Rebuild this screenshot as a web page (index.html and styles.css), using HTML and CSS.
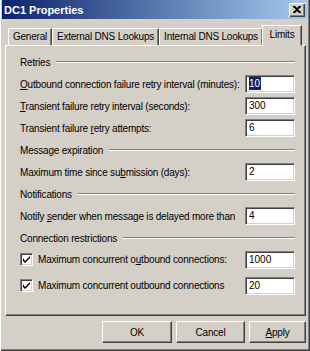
FILE: index.html
```html
<!DOCTYPE html>
<html>
<head>
<meta charset="utf-8">
<link rel="stylesheet" href="styles.css">
</head>
<body>
<div class="window">
  <div class="titlebar">
    <span class="title">DC1 Properties</span>
    <span class="close"><svg width="8" height="7" viewBox="0 0 8 7"><path d="M0 0h2l2 2 2-2h2v1L5 3.5 8 6v1H6L4 5 2 7H0V6l3-2.5L0 1z" fill="#000"/></svg></span>
  </div>
  <div class="content">
    <div class="tabs">
      <div class="tab t-general">General</div>
      <div class="tab t-ext">External DNS Lookups</div>
      <div class="tab t-int">Internal DNS Lookups</div>
      <div class="tab t-limits active">Limits</div>
    </div>
    <div class="panel">
      <div class="group first"><span>Retries</span><i class="rule"></i></div>
      <div class="row"><span class="lbl"><u>O</u>utbound connection failure retry interval (minutes):</span><span class="field"><span class="hl">10</span></span></div>
      <div class="row"><span class="lbl"><u>T</u>ransient failure retry interval (seconds):</span><span class="field">300</span></div>
      <div class="row"><span class="lbl">Transient failure <u>r</u>etry attempts:</span><span class="field">6</span></div>
      <div class="group"><span>Message expiration</span><i class="rule"></i></div>
      <div class="row"><span class="lbl">Maximum time since su<u>b</u>mission (days):</span><span class="field">2</span></div>
      <div class="group"><span>Notifications</span><i class="rule"></i></div>
      <div class="row"><span class="lbl">Notify <u>s</u>ender when message is delayed more than</span><span class="field">4</span></div>
      <div class="group"><span>Connection restrictions</span><i class="rule"></i></div>
      <div class="row"><span class="lbl"><span class="check"><svg width="7" height="7" viewBox="0 0 7 7"><path d="M0 2v3l2 2 5-5V0L2 5z" fill="#000"/></svg></span>Maximum concurrent o<u>u</u>tbound connections:</span><span class="field">1000</span></div>
      <div class="row last"><span class="lbl"><span class="check"><svg width="7" height="7" viewBox="0 0 7 7"><path d="M0 2v3l2 2 5-5V0L2 5z" fill="#000"/></svg></span>Maximum concurrent outbound connections</span><span class="field">20</span></div>
    </div>
    <div class="buttons">
      <span class="btn b-ok">OK</span>
      <span class="btn b-cancel">Cancel</span>
      <span class="btn b-apply"><u>A</u>pply</span>
    </div>
  </div>
</div>
</body>
</html>
```

FILE: styles.css
```css
* { box-sizing: border-box; }
body {
  margin: 0;
  background: #d4d0c8;
  font: 10px "Liberation Sans", Arial, sans-serif;
  letter-spacing: -0.2px;
  color: #000;
}
.window {
  width: 310px;
  height: 351px;
  padding: 0 2px 3px 2px;
  background: #d4d0c8;
  box-shadow: inset 1px 0 #fff, inset -1px -1px #404040, inset -2px -2px #808080;
  display: flex;
  flex-direction: column;
}
.titlebar {
  height: 19px;
  background: linear-gradient(to right, #0a246a, #a6caf0);
  display: flex;
  align-items: center;
  justify-content: space-between;
  padding: 0 3px 0 2px;
}
.title {
  color: #fff;
  font-weight: bold;
  font-size: 11px;
  letter-spacing: 0;
}
.close {
  width: 16px;
  height: 14px;
  background: #d4d0c8;
  box-shadow: inset 1px 1px #fff, inset -1px -1px #404040, inset -2px -2px #808080;
  display: flex;
  align-items: center;
  justify-content: center;
  padding: 0 1px 1px 0;
}
.content {
  flex: 1;
  display: flex;
  flex-direction: column;
  padding: 6px 2px 0 3px;
}
.tabs {
  display: flex;
  align-items: flex-end;
  height: 20px;
  padding-left: 3px;
  position: relative;
  z-index: 1;
}
.tab {
  height: 17px;
  line-height: 15px;
  text-align: center;
  border-top: 1px solid #fff;
  border-left: 1px solid #fff;
  border-right: 1px solid #404040;
  box-shadow: inset -1px 0 #808080;
  background: #d4d0c8;
  white-space: nowrap;
}
.t-general { width: 44px; }
.t-ext { width: 107px; }
.t-int { width: 104px; }
.tab.active {
  width: 40px;
  height: 21px;
  line-height: 18px;
  margin-left: -1px;
  margin-bottom: -1px;
  border-bottom: 1px solid #d4d0c8;
}
.panel {
  height: 271px;
  border-top: 1px solid #fff;
  border-left: 1px solid #fff;
  border-right: 1px solid #404040;
  border-bottom: 1px solid #404040;
  box-shadow: inset -1px -1px #808080;
  padding: 5px 10px 0 14px;
}
.group {
  height: 22px;
  display: flex;
  align-items: center;
}
.rule {
  flex: 1;
  height: 2px;
  margin-left: 6px;
  border-top: 1px solid #808080;
  border-bottom: 1px solid #fff;
}
.row {
  height: 22px;
  display: flex;
  align-items: center;
  justify-content: space-between;
}
.row.last { margin-top: 4px; }
.lbl {
  white-space: nowrap;
}
.check {
  display: inline-flex;
  vertical-align: middle;
  width: 13px;
  height: 13px;
  margin: -2px 5px 0 0;
  background: #fff;
  border-top: 1px solid #808080;
  border-left: 1px solid #808080;
  border-right: 1px solid #fff;
  border-bottom: 1px solid #fff;
  box-shadow: inset 1px 1px #404040, inset -1px -1px #d4d0c8;
  align-items: center;
  justify-content: center;
}
.field {
  width: 50px;
  height: 18px;
  background: #fff;
  border-top: 1px solid #808080;
  border-left: 1px solid #808080;
  border-right: 1px solid #fff;
  border-bottom: 1px solid #fff;
  box-shadow: inset 1px 1px #404040, inset -1px -1px #d4d0c8;
  padding: 1px 0 0 3px;
  line-height: 14px;
  letter-spacing: 0;
}
.hl {
  background: #0a246a;
  color: #fff;
  display: inline-block;
  line-height: 13px;
  padding: 0 1px 0 0;
}
.buttons {
  display: flex;
  justify-content: flex-end;
  padding-top: 5px;
  gap: 4px;
}
.btn {
  height: 22px;
  display: flex;
  align-items: center;
  justify-content: center;
  background: #d4d0c8;
  border-top: 1px solid #fff;
  border-left: 1px solid #fff;
  border-right: 1px solid #404040;
  border-bottom: 1px solid #404040;
  box-shadow: inset -1px -1px #808080;
}
.b-ok { width: 70px; }
.b-cancel { width: 69px; }
.b-apply { width: 57px; }
```
